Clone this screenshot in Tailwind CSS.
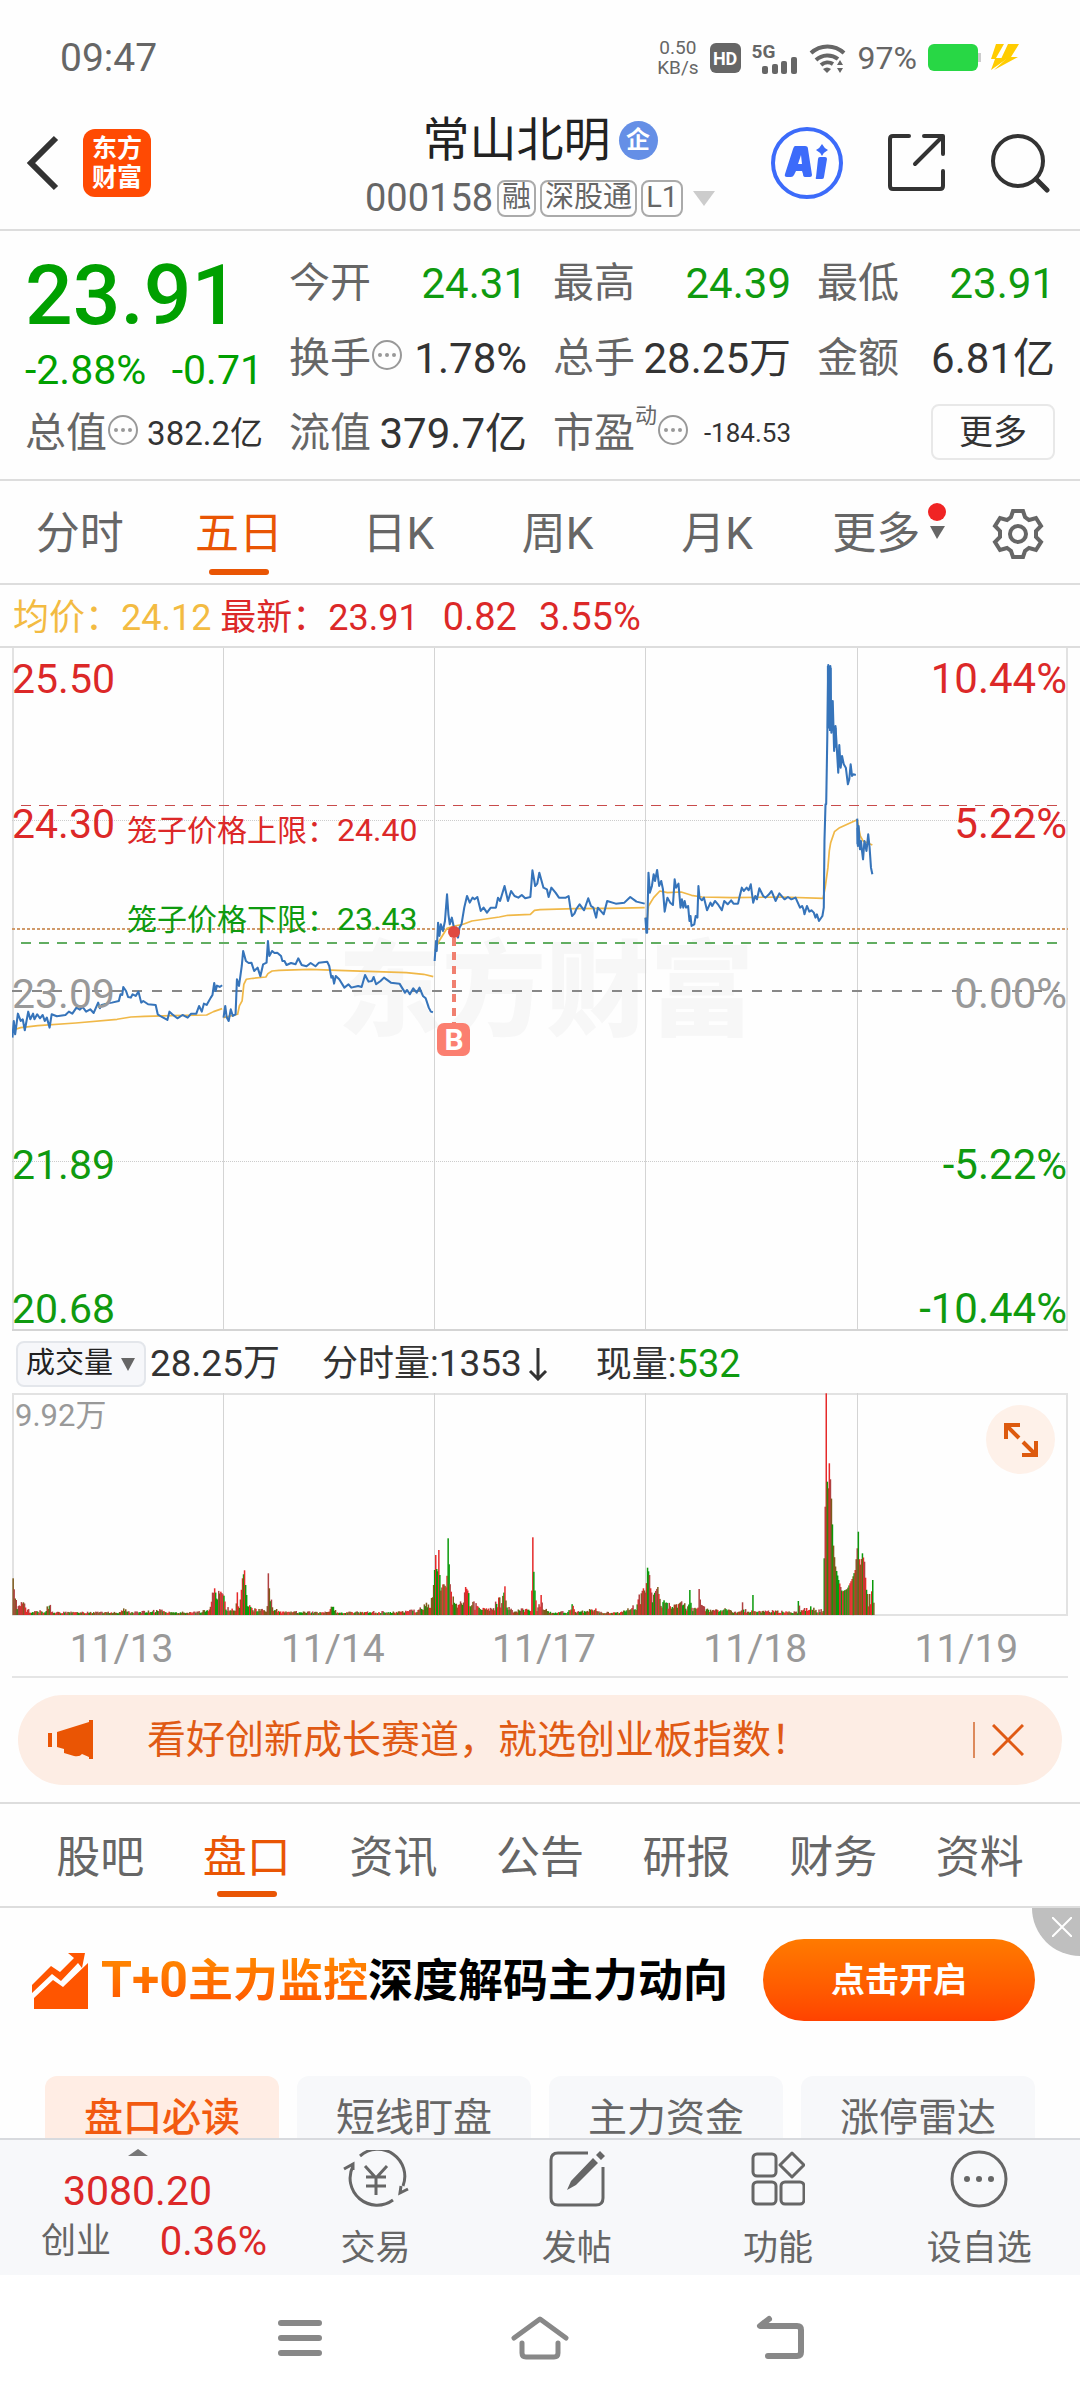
<!DOCTYPE html>
<html lang="zh-CN">
<head>
    <meta charset="UTF-8">
    <meta name="viewport" content="width=device-width, initial-scale=1.0">
    <title>常山北明 000158</title>
    <script src="https://cdn.jsdelivr.net/npm/@tailwindcss/browser@4"></script>
</head>
<body class="bg-[#fefefe] text-[#333] font-[Roboto,'Noto_Sans_CJK_SC',sans-serif]">

    <!-- status bar -->
    <div class="flex items-center justify-between h-28 pt-1 px-[60px] text-[#666]">
        <span class="text-[39px]">09:47</span>
        <div class="flex items-center gap-[11px]">
            <div class="text-[19px] leading-[20px] text-center"><div>0.50</div><div>KB/s</div></div>
            <span class="flex items-center justify-center w-[31px] h-[30px] rounded-md bg-[#666] text-white text-[18px] font-bold">HD</span>
            <div class="relative w-[46px] h-[32px]">
                <span class="absolute left-0 top-0 text-[19px] leading-[19px] font-bold">5G</span>
                <svg class="absolute right-0 bottom-0 w-[36px] h-[17px]" viewBox="0 0 36 17" fill="#666">
                    <rect x="0" y="9" width="6" height="8" rx="2"/><rect x="10" y="7" width="6" height="10" rx="2"/>
                    <rect x="19" y="4" width="6" height="13" rx="2"/><rect x="29" y="0" width="6" height="17" rx="2"/>
                </svg>
            </div>
            <svg class="w-[38px] h-[30px]" viewBox="0 0 38 30" fill="none" stroke="#666" stroke-width="4">
                <path d="M2 10 A24 24 0 0 1 35 10"/><path d="M7 17 A17 17 0 0 1 29 16"/><path d="M12 22 A10 10 0 0 1 24 21"/>
                <path d="M14 26 L18 30 L22 26 Q18 23 14 26z M28 22 L31 17 L34 22z M28 25 L31 30 L34 25z" fill="#666" stroke="none"/>
            </svg>
            <span class="text-[32px]">97%</span>
            <svg class="w-[92px] h-[30px]" viewBox="0 0 92 30">
                <rect x="0" y="1" width="50" height="27" rx="6" fill="#28d745"/><rect x="50" y="10" width="3" height="9" fill="#ccc"/>
                <path d="M68 1 H76 L68 15 H80 L63 27 L67 16 H63z" fill="#fc0"/><path d="M80 1 H91 L83 14 H90 L66 27 L78 16 H73z" fill="#fc0"/>
            </svg>
        </div>
    </div>

    <!-- header -->
    <header class="grid grid-cols-[1fr_auto_1fr] h-[119px] border-b-2 border-[#ddd]">
        <div class="flex items-center gap-[24px] pl-[26px] pb-4">
            <button aria-label="返回">
                <svg class="w-[33px] h-[56px]" viewBox="0 0 33 56" fill="none" stroke="#333" stroke-width="6"><path d="M30 3 L5 28 L30 53"/></svg>
            </button>
            <a href="#" class="flex items-center justify-center w-[68px] h-[68px] rounded-xl bg-[#ff4a03] text-white text-[25px] leading-[29px] font-bold text-center">东方<br>财富</a>
        </div>
        <div class="text-center">
            <h1 class="flex items-center justify-center gap-2 h-14 text-[47px] text-[#222]">常山北明
                <span class="flex items-center justify-center w-[39px] h-[39px] rounded-full bg-[#658fe6] text-white text-[24px] font-bold">企</span>
            </h1>
            <div class="flex items-center justify-center gap-[4px] h-[60px] text-[38px] text-[#666]">000158
                <span class="flex items-center h-[37px] px-[3px] border-2 border-[#aaa] rounded-lg text-[29px]">融</span>
                <span class="flex items-center h-[37px] px-[3px] border-2 border-[#aaa] rounded-lg text-[29px]">深股通</span>
                <span class="flex items-center h-[37px] px-[3px] border-2 border-[#aaa] rounded-lg text-[29px]">L1</span>
                <svg class="ml-[6px] w-[22px] h-[15px]" viewBox="0 0 22 15"><path d="M0 0 H22 L11 15z" fill="#ccc"/></svg>
            </div>
        </div>
        <div class="flex items-center justify-end gap-[44px] pr-[30px] pb-4">
            <button aria-label="Ai">
                <svg class="w-[72px] h-[72px]" viewBox="0 0 72 72" fill="#3c6bfa">
                    <circle cx="36" cy="36" r="34" fill="none" stroke="#3c6bfa" stroke-width="4"/>
                    <path d="M24 19 H34 Q37 19 37 22 L41 48 Q41 50 39 50 H34 Q32 50 32 47 L31 44 H25 L23 48 Q22 50 20 50 H16 Q13 50 14 47 L22 22 Q23 19 24 19z M30 28 L27 37 H31z" fill-rule="evenodd"/>
                    <path d="M49 30 H54 Q56 30 56 32 L53 50 Q53 52 51 52 H46 Q44 52 45 50 L47 32 Q47 30 49 30z"/>
                    <path d="M51 17 Q53 21 57 23 Q53 25 51 29 Q49 25 45 23 Q49 21 51 17z"/>
                </svg>
            </button>
            <button aria-label="分享">
                <svg class="w-[59px] h-[59px]" viewBox="0 0 59 59" fill="none" stroke="#333" stroke-width="4" stroke-linecap="round" stroke-linejoin="round"><path d="M22 3 H6 Q3 3 3 6 V53 Q3 56 6 56 H53 Q56 56 56 53 V38 M37 3 H56 V21 M55 4 L28 31"/></svg>
            </button>
            <button aria-label="搜索">
                <svg class="w-[60px] h-[60px]" viewBox="0 0 60 60" fill="none" stroke="#333" stroke-width="4" stroke-linecap="round"><circle cx="28" cy="28" r="25"/><path d="M46 46 L57 57" stroke-width="5"/></svg>
            </button>
        </div>
    </header>

    <!-- quote summary -->
    <section class="grid grid-cols-4 auto-rows-[75px] gap-x-[26px] px-[25px] pt-[15px] pb-[8px] border-b-2 border-[#ddd] text-[42px] text-[#333]">
        <div class="row-span-2 text-[#00a000]">
            <div class="text-[84px] leading-[100px] font-medium">23.91</div>
            <div class="flex justify-between text-[41px] leading-[48px]"><span>-2.88%</span><span>-0.71</span></div>
        </div>
        <div class="flex items-center justify-between"><span class="text-[41px] text-[#666]">今开</span><span class="text-[#0f9a0f]">24.31</span></div>
        <div class="flex items-center justify-between"><span class="text-[41px] text-[#666]">最高</span><span class="text-[#0f9a0f]">24.39</span></div>
        <div class="flex items-center justify-between"><span class="text-[41px] text-[#666]">最低</span><span class="text-[#0f9a0f]">23.91</span></div>
        <div class="flex items-center justify-between">
            <span class="flex items-center text-[41px] text-[#666]">换手<svg class="mb-2 w-[31px] h-[31px]" viewBox="0 0 31 31" fill="#999"><circle cx="16" cy="16" r="14" fill="none" stroke="#999" stroke-width="2"/><circle cx="9" cy="16" r="2"/><circle cx="16" cy="16" r="2"/><circle cx="23" cy="16" r="2"/></svg></span>
            <span>1.78%</span>
        </div>
        <div class="flex items-center justify-between"><span class="text-[41px] text-[#666]">总手</span><span>28.25万</span></div>
        <div class="flex items-center justify-between"><span class="text-[41px] text-[#666]">金额</span><span>6.81亿</span></div>
        <div class="flex items-center justify-between">
            <span class="flex items-center text-[41px] text-[#666]">总值<svg class="mb-2 w-[31px] h-[31px]" viewBox="0 0 31 31" fill="#999"><circle cx="16" cy="16" r="14" fill="none" stroke="#999" stroke-width="2"/><circle cx="9" cy="16" r="2"/><circle cx="16" cy="16" r="2"/><circle cx="23" cy="16" r="2"/></svg></span>
            <span class="text-[33px]">382.2亿</span>
        </div>
        <div class="flex items-center justify-between"><span class="text-[41px] text-[#666]">流值</span><span>379.7亿</span></div>
        <div class="flex items-center justify-between">
            <span class="flex items-center text-[41px] text-[#666]">市盈<span class="mb-9 text-[22px]">动</span><svg class="mb-2 w-[31px] h-[31px]" viewBox="0 0 31 31" fill="#999"><circle cx="16" cy="16" r="14" fill="none" stroke="#999" stroke-width="2"/><circle cx="9" cy="16" r="2"/><circle cx="16" cy="16" r="2"/><circle cx="23" cy="16" r="2"/></svg></span>
            <span class="text-[26px]">-184.53</span>
        </div>
        <div class="flex items-center justify-end">
            <button class="w-[124px] h-14 mb-1 border-2 border-[#e8e8e8] rounded-lg text-[34px] leading-none">更多</button>
        </div>
    </section>

    <!-- period tabs -->
    <nav class="flex items-center h-[104px] pt-1 border-b-2 border-[#ddd] text-[44px] text-[#666]">
        <a href="#" class="flex-1 text-center">分时</a>
        <a href="#" class="relative flex-1 text-center text-[#e95504]">五日<span class="absolute left-1/2 -bottom-2 -translate-x-1/2 w-[60px] h-[6px] rounded-full bg-[#e95504]"></span></a>
        <a href="#" class="flex-1 text-center">日K</a>
        <a href="#" class="flex-1 text-center">周K</a>
        <a href="#" class="flex-1 text-center">月K</a>
        <a href="#" class="relative flex-1 text-center">更多
            <svg class="absolute right-1 top-0 w-[24px] h-[40px]" viewBox="0 0 24 40"><circle cx="9" cy="11" r="9" fill="#f02424"/><path d="M2 25 H17 L9 38z" fill="#666"/></svg>
        </a>
        <button aria-label="设置" class="flex justify-center w-[124px]">
            <svg class="w-[52px] h-[52px]" viewBox="-1 -1 52 52" fill="none" stroke="#666" stroke-width="4"><path d="M20 2 H30 L32 8 L36 11 L43 9 L48 17 L43 22 V28 L48 33 L43 41 L36 39 L32 42 L30 48 H20 L18 42 L14 39 L7 41 L2 33 L7 28 V22 L2 17 L7 9 L14 11 L18 8z"/><circle cx="25" cy="25" r="8"/></svg>
        </button>
    </nav>

    <div class="flex h-[63px] items-center pt-1 px-[13px] text-[36px] whitespace-pre border-b-2 border-[#ddd] text-[#dc2828]"><span class="text-[#f3bb42]">均价：24.12 </span><span>最新：23.91</span><span class="ml-[24px] text-[38px]">0.82</span><span class="ml-[22px] text-[38px]">3.55%</span></div>

    <!-- five day price chart -->
    <section class="relative mx-3 h-[683px]">
        <svg class="absolute inset-0 w-full h-full" viewBox="0 0 1056 683" preserveAspectRatio="none" fill="none">
            <text x="326" y="380" font-size="104" font-weight="900" fill="#f7f7f7">东方财富</text>
            <path d="M1 0 V683 M1055 0 V683" stroke="#e2e2e2" stroke-width="2"/>
            <path d="M211.5 0 V683 M422.5 0 V683 M633.5 0 V683 M845.5 0 V683" stroke="#d4d4d4"/>
            <path d="M0 682 H1056" stroke="#d4d4d4" stroke-width="2"/>
            <path d="M0 172.500 H1056 M0 513.500 H1056" stroke="#ccc" stroke-dasharray="1 1"/>
            <path d="M9 157.500 H1046" stroke="#c84b4b" stroke-dasharray="10 8"/>
            <path d="M0 281 H1056" stroke="#d09a6a" stroke-width="2" stroke-dasharray="3 2"/>
            <path d="M9 295 H1046" stroke="#61ad61" stroke-width="2" stroke-dasharray="10 8"/>
            <path d="M0 343 H1046" stroke="#888" stroke-width="2" stroke-dasharray="10 10"/>
            <!-- average price -->
            <g stroke="#f0b848" stroke-width="5" stroke-linejoin="round">
                <g transform="translate(-12 -7) scale(.3444 .3333)">
                    <path d="M36 1168 L60 1160 110 1154 220 1146 340 1135 380 1128 420 1126 500 1124 600 1122 620 1112 645 1103"/>
                    <path d="M649 1130 L690 1120 695 1095 703 1080 708 1030 715 1015 735 1012 772 1008 778 998 790 990 810 988 900 985 980 988 1180 995 1230 1000 1258 1007"/>
                    <path d="M1262 930 L1275 900 1298 862 1320 855 1345 850 1370 840 1450 828 1475 823 1540 820 1552 808 1568 806 1668 803 1768 802 1872 800"/>
                </g>
                <g transform="translate(528 -7) scale(.3444 .3333)">
                    <path d="M306 830 L311 840 315 795 330 770 348 750 370 755 410 753 440 763 470 768 560 770 700 768 822 772 828 740 836 680 840 630 844 605 855 572 870 560 921 536"/>
                    <path d="M921 536 L930 585 938 600 965 612"/>
                </g>
            </g>
            <!-- price -->
            <g stroke="#3674ba" stroke-width="6" stroke-linejoin="round">
                <g transform="translate(-12 -7) scale(.3444 .3333)">
                    <path d="M36 1190 L40 1140 44 1180 52 1118 60 1140 66 1135 72 1168 82 1112 88 1135 96 1118 100 1135 108 1120 116 1132 124 1122 130 1140 136 1130 144 1160 150 1120 165 1126 190 1122 200 1112 210 1118 222 1100 232 1106 240 1098 250 1112 262 1105 272 1116 285 1085 290 1102 295 1092 310 1088 325 1085 345 1080 350 1060 355 1062 358 1038 366 1050 372 1068 380 1070 385 1060 394 1065 402 1052 410 1085 416 1080 430 1090 452 1092 458 1120 470 1128 486 1137 492 1112 500 1120 515 1132 530 1122 545 1130 555 1118 570 1118 578 1095 586 1112 592 1088 600 1092 612 1070 617 1062 622 1026 626 1050 630 1034 638 1038 645 1033"/>
                    <path d="M649 1130 L654 1095 658 1128 664 1140 670 1105 676 1125 684 1120 688 1015 694 1035 702 975 706 930 714 960 722 966 730 965 738 990 748 980 756 1006 764 970 774 965 778 900 782 945 790 930 797 936 805 935 816 945 820 960 826 960 832 972 845 966 858 970 866 952 876 972 890 976 902 966 916 976 926 965 950 962 956 975 962 1010 966 1005 970 1028 975 1005 985 1015 1000 1040 1012 1030 1020 1040 1040 1035 1050 1038 1060 1002 1070 1022 1080 1020 1085 1008 1092 1030 1105 1020 1115 1010 1135 1025 1160 1028 1176 1055 1182 1047 1190 1060 1200 1042 1210 1055 1218 1040 1228 1065 1236 1072 1245 1100 1251 1112 1257 1114"/>
                    <path d="M1262 960 L1266 900 1268 930 1272 845 1276 885 1280 850 1286 870 1292 840 1298 760 1302 820 1306 850 1312 830 1320 870 1325 860 1330 890 1334 860 1340 850 1348 800 1356 765 1364 785 1372 770 1378 775 1386 768 1396 810 1404 800 1414 815 1425 800 1440 800 1446 770 1452 780 1465 735 1475 780 1484 750 1494 765 1505 770 1515 762 1525 772 1540 768 1546 688 1554 735 1560 728 1566 695 1578 740 1588 745 1593 768 1601 740 1613 755 1623 770 1643 770 1651 765 1656 800 1661 825 1668 818 1673 805 1683 790 1696 808 1708 772 1716 795 1723 800 1731 830 1736 800 1753 820 1763 780 1788 788 1813 785 1830 768 1848 782 1872 788"/>
                </g>
                <g transform="translate(528 -7) scale(.3444 .3333)">
                    <path d="M306 830 L309 875 311 875 315 695 319 755 325 735 330 700 334 720 340 687 346 735 352 720 357 745 362 812 366 790 370 770 378 785 386 792 391 715 395 740 402 728 408 800 412 775 416 800 420 780 424 800 430 795 434 840 437 825 440 855 448 850 452 825 457 830 460 735 463 770 470 778 476 770 485 808 495 785 500 795 508 780 518 792 528 808 535 780 545 790 555 778 562 788 575 788 580 765 586 740 592 750 600 740 606 748 612 730 619 785 625 765 630 775 637 742 648 765 655 770 665 760 672 750 684 780 695 757 710 775 720 768 730 775 742 770 755 800 761 795 765 805 768 820 775 795 782 812 788 808 795 815 800 830 804 820 810 840 820 825 824 800 826 600 829 490 831 490 834 300 837 72 840 260 843 75 846 275 850 180 854 330 858 255 862 325 866 395 869 312 873 380 877 345 882 370 888 380 894 430 898 415 902 370 906 405 910 400 917 402"/>
                    <path d="M921 533 L923 615 925 555 929 625 932 600 935 630 938 655 942 600 948 630 953 580 957 620 961 680 965 700"/>
                    <path d="M837 75 V260 M843 80 V270 M857 260 V320 M923 560 V610" stroke-width="8"/>
                </g>
            </g>
            <path d="M442 290 V376" stroke="#f08070" stroke-width="4" stroke-dasharray="8 6"/>
            <circle cx="442" cy="284" r="6" fill="#e04a40"/>
            <rect x="425" y="375" width="33" height="33" rx="7" fill="#fb7f70"/>
            <text x="442" y="402" font-size="30" font-weight="700" text-anchor="middle" fill="#fff">B</text>
        </svg>
        <div class="absolute left-0 top-[10px] text-[41px] leading-[42px] text-[#dc2828]">25.50</div>
        <div class="absolute right-[1px] top-[10px] text-[42px] leading-[42px] text-[#dc2828]">10.44%</div>
        <div class="absolute left-0 top-[155px] text-[41px] leading-[42px] text-[#dc2828]">24.30</div>
        <div class="absolute right-[1px] top-[155px] text-[42px] leading-[42px] text-[#dc2828]">5.22%</div>
        <div class="absolute left-0 top-[325px] text-[41px] leading-[42px] text-[#999]">23.09</div>
        <div class="absolute right-[1px] top-[325px] text-[42px] leading-[42px] text-[#999]">0.00%</div>
        <div class="absolute left-0 top-[496px] text-[41px] leading-[42px] text-[#0f9a0f]">21.89</div>
        <div class="absolute right-[1px] top-[496px] text-[42px] leading-[42px] text-[#0f9a0f]">-5.22%</div>
        <div class="absolute left-0 top-[640px] text-[41px] leading-[42px] text-[#0f9a0f]">20.68</div>
        <div class="absolute right-[1px] top-[640px] text-[42px] leading-[42px] text-[#0f9a0f]">-10.44%</div>
        <div class="absolute left-[115px] top-[161px] text-[30px] leading-[42px] text-[#dc2828]">笼子价格上限：<span class="text-[32px]">24.40</span></div>
        <div class="absolute left-[115px] top-[250px] text-[30px] leading-[42px] text-[#0f9a0f]">笼子价格下限：<span class="text-[32px]">23.43</span></div>
    </section>

    <!-- volume -->
    <div class="flex items-center h-[62px] pt-1 pl-4 text-[36px] whitespace-nowrap">
        <button class="flex items-center gap-2 h-[46px] w-[130px] pl-[8px] mr-[4px] border-2 border-[#e3e6eb] rounded-lg bg-[#f6f7fa] text-[29px] text-[#222]">成交量
            <svg class="w-[14px] h-[13px]" viewBox="0 0 14 13"><path d="M0 0 H14 L7 13z" fill="#666"/></svg>
        </button>
        <span class="text-[37px]">28.25万</span>
        <span class="ml-[42px]">分时量:<span class="text-[37px]">1353</span></span>
        <svg class="ml-[6px] w-[20px] h-[34px]" viewBox="0 0 20 34" fill="none" stroke="#333" stroke-width="3"><path d="M10 1 V32 M2 24 L10 32 L18 24"/></svg>
        <span class="ml-[48px]">现量:<span class="text-[38px] text-[#0f9a0f]">532</span></span>
    </div>
    <section class="relative mx-3 h-[223px]">
        <svg class="absolute inset-0 w-full h-full" viewBox="0 0 1056 223" preserveAspectRatio="none" fill="none">
            <path d="M1 1 H1055 V222 H1z" stroke="#e2e2e2" stroke-width="2"/>
            <path d="M211.5 0 V222 M422.5 0 V222 M633.5 0 V222 M845.5 0 V222" stroke="#d4d4d4"/>
            <g id="volume"></g>
        </svg>
        <div class="absolute left-[3px] top-[5px] text-[31px] leading-[36px] text-[#999]">9.92万</div>
        <button aria-label="放大" class="absolute right-[13px] top-[12px] flex items-center justify-center w-[69px] h-[69px] rounded-full bg-[#fef1e9]">
            <svg class="w-[34px] h-[34px]" viewBox="0 0 34 34" fill="none" stroke="#dd5a0e" stroke-width="4"><path d="M16 2 H2 V16 M2 2 L15 15 M18 32 H32 V18 M32 32 L19 19"/></svg>
        </button>
    </section>
    <div class="mx-3 border-b-2 border-[#e5e5e5]">
        <div class="grid grid-cols-5 items-center ml-1 -mr-1 h-[60px] pt-1 text-center text-[39px] text-[#999]">
            <span>11/13</span><span>11/14</span><span>11/17</span><span>11/18</span><span>11/19</span>
        </div>
    </div>

    <!-- notice -->
    <div class="flex items-center mx-[18px] my-[17px] h-[90px] pl-[30px] pr-[38px] rounded-full bg-[#fdede4] text-[39px] text-[#e05a14]">
        <svg class="w-[45px] h-[40px]" viewBox="0 0 45 40" fill="#ea5504"><path d="M0 13 H4 V27 H0z M9 12 L41 2 V0 H45 V39 H41 V37 L34 34 Q32 37 26 36 L16 33 V29 L9 27z"/></svg>
        <a href="#" class="ml-[54px] flex-1">看好创新成长赛道，就选创业板指数！</a>
        <span class="w-[2px] h-9 bg-[#dd8a5c]"></span>
        <button aria-label="关闭" class="ml-[17px]"><svg class="w-[32px] h-[32px]" viewBox="0 0 32 32" stroke="#e05a14" stroke-width="3"><path d="M1 1 L31 31 M31 1 L1 31"/></svg></button>
    </div>

    <!-- content tabs -->
    <nav class="flex items-center h-[106px] pt-1.5 px-[27px] border-y-2 border-[#ddd] text-[44px] text-[#666]">
        <a href="#" class="flex-1 text-center">股吧</a>
        <a href="#" class="relative flex-1 text-center text-[#e95504]">盘口<span class="absolute left-1/2 -bottom-1.5 -translate-x-1/2 w-[60px] h-[6px] rounded-full bg-[#e95504]"></span></a>
        <a href="#" class="flex-1 text-center">资讯</a>
        <a href="#" class="flex-1 text-center">公告</a>
        <a href="#" class="flex-1 text-center">研报</a>
        <a href="#" class="flex-1 text-center">财务</a>
        <a href="#" class="flex-1 text-center">资料</a>
    </nav>

    <!-- promotion -->
    <section class="relative flex items-center h-[168px] pl-8 pr-[45px] pb-6">
        <svg class="w-[56px] h-[57px]" viewBox="0 0 56 57" fill="#ff5500"><path d="M0 33 L19 14 L28 20 L42 6 L36 1 H53 L50 16 L46 11 L29 29 L20 22 L0 41z"/><path d="M2 57 V46 L21 28 L31 35 L56 11 V57z"/></svg>
        <div class="flex-1 ml-[13px] text-[45px] font-bold text-black whitespace-nowrap"><span class="bg-linear-to-b from-[#ff8a00] to-[#ff5000] bg-clip-text text-transparent"><span class="text-[50px]">T+0</span>主力监控</span>深度解码主力动向</div>
        <button class="w-[272px] h-[82px] rounded-full bg-linear-to-b from-[#ff7a00] to-[#ff4200] text-white text-[34px] font-bold">点击开启</button>
        <button aria-label="关闭广告" class="absolute right-0 top-0 flex items-start justify-end w-12 h-12 pr-[8px] pt-[9px] rounded-bl-full bg-[#bfbfbf]">
            <svg class="w-[20px] h-[20px]" viewBox="0 0 20 20" stroke="#fff" stroke-width="2"><path d="M0 0 L20 20 M20 0 L0 20"/></svg>
        </button>
    </section>
    <div class="grid grid-cols-4 gap-[18px] px-[45px] h-[62px] overflow-hidden text-[39px] text-[#666]">
        <button class="h-[84px] rounded-xl bg-[#ffede4] text-[#f25a10] font-medium">盘口必读</button>
        <button class="h-[84px] rounded-xl bg-[#f7f8fa]">短线盯盘</button>
        <button class="h-[84px] rounded-xl bg-[#f7f8fa]">主力资金</button>
        <button class="h-[84px] rounded-xl bg-[#f7f8fa]">涨停雷达</button>
    </div>

    <!-- bottom bar -->
    <footer class="flex h-[137px] border-t-2 border-[#d8dade] bg-[#f7f8fa] text-[35px] text-[#666]">
        <a href="#" class="flex flex-col items-center w-[275px] pt-[9px]">
            <svg class="w-[20px] h-[7px]" viewBox="0 0 20 7"><path d="M0 7 L10 0 L20 7z" fill="#777"/></svg>
            <span class="mt-[9px] text-[41px] leading-[52px] text-[#dc2828]">3080.20</span>
            <span class="flex items-center justify-between w-full pl-[41px] pr-[8px] leading-[50px]">创业<span class="text-[40px] text-[#dc2828]">0.36%</span></span>
        </a>
        <a href="#" class="flex-1 flex flex-col items-center pt-[10px]">
            <svg class="w-[66px] h-[58px]" viewBox="0 0 66 58" fill="none" stroke="#666" stroke-width="3"><path d="M17 6 A27 27 0 0 1 60 36 M50 50 A27 27 0 0 1 10 16 M1 19 L10 14 V20 M65 39 L57 43 L58 36 M22 16 L33 28 L44 16 M33 28 V45 M23 27 H43 M23 36 H43"/></svg>
            <span class="mt-[18px] leading-[46px]">交易</span>
        </a>
        <a href="#" class="flex-1 flex flex-col items-center pt-[10px]">
            <svg class="w-[56px] h-[58px]" viewBox="0 0 56 58" fill="none" stroke="#666" stroke-width="3"><path d="M39 3 H9 Q2 3 2 10 V48 Q2 55 9 55 H47 Q54 55 54 48 V17"/><path d="M44 8 L49 13 L27 35 L18 40 L22 31z M47 5 L51 1 L56 6 L52 10z" fill="#666" stroke="none"/></svg>
            <span class="mt-[18px] leading-[46px]">发帖</span>
        </a>
        <a href="#" class="flex-1 flex flex-col items-center pt-[10px]">
            <svg class="w-[54px] h-[58px]" viewBox="0 0 54 58" fill="none" stroke="#666" stroke-width="3"><rect x="2" y="4" width="23" height="22" rx="4"/><rect x="2" y="32" width="23" height="22" rx="4"/><rect x="30" y="32" width="23" height="22" rx="4"/><path d="M41 3 L53 15 L41 27 L29 15z" stroke-linejoin="round"/></svg>
            <span class="mt-[18px] leading-[46px]">功能</span>
        </a>
        <a href="#" class="flex-1 flex flex-col items-center pt-[10px]">
            <svg class="w-[58px] h-[58px]" viewBox="0 0 58 58" fill="#666"><circle cx="29" cy="29" r="27" fill="none" stroke="#666" stroke-width="3"/><circle cx="17" cy="29" r="3"/><circle cx="29" cy="29" r="3"/><circle cx="41" cy="29" r="3"/></svg>
            <span class="mt-[18px] leading-[46px]">设自选</span>
        </a>
    </footer>

    <!-- system navigation -->
    <div class="grid grid-cols-3 h-[125px] px-[180px] bg-white">
        <button aria-label="菜单" class="flex items-center justify-center"><svg class="w-[46px] h-[44px]" viewBox="0 0 46 44" stroke="#888" stroke-width="6" stroke-linecap="round"><path d="M4 7 H42 M4 22 H42 M4 37 H42"/></svg></button>
        <button aria-label="主屏幕" class="flex items-center justify-center"><svg class="w-[58px] h-[46px]" viewBox="0 0 58 46" fill="none" stroke="#888" stroke-width="5" stroke-linecap="round" stroke-linejoin="round"><path d="M3 23 L29 4 L55 23 M11 28 V38 Q11 42 15 42 H43 Q47 42 47 38 V28"/></svg></button>
        <button aria-label="后退" class="flex items-center justify-center"><svg class="w-[50px] h-[46px]" viewBox="0 0 50 46" fill="none" stroke="#888" stroke-width="6" stroke-linecap="round" stroke-linejoin="round"><path d="M14 4 L5 11 H42 Q46 11 46 15 V37 Q46 41 42 41 H13"/></svg></button>
    </div>

    <script>
        // [offset, height, colour index] turning points of the volume envelope, 3 units per pixel
        var points = [[36,110,1],[42,44],[50,20],[65,35],[75,18],[90,10],[130,12],[140,35],[150,8],[345,8],[358,18],[375,7],[460,14],[500,9],[570,8],[600,15],[612,40,0],[621,80,0],[628,50],[639,70,0],[648,58,1],[655,20],[680,18],[687,68,0],[694,18],[702,110,0],[708,134,0],[711,90,1],[716,40],[730,20],[772,12],[775,45],[777,125,6],[782,50,1],[790,25],[810,10],[950,8],[965,28],[975,8],[1170,10],[1215,15],[1240,38],[1254,45],[1263,180,0],[1268,110],[1272,195,0],[1277,70],[1285,95,0],[1295,80],[1299,230,1],[1304,100,1],[1310,55],[1325,28],[1345,35],[1350,84,0],[1358,70,0],[1365,40],[1385,25],[1430,15],[1447,55,0],[1455,30],[1464,86,0],[1470,25],[1485,12],[1541,20],[1545,233,0],[1549,95,1],[1556,20],[1562,20],[1569,60,0],[1573,22],[1600,8],[1648,10],[1658,38,1],[1668,8],[1728,20],[1738,8],[1798,8],[1828,20],[1843,25],[1858,60],[1866,80,0],[1873,65],[1878,142,1],[1884,120,6],[1887,80],[1893,55],[1908,84,2],[1915,35],[1928,50,1],[1943,25],[1983,35],[1997,20],[2001,75,1],[2006,18],[2023,20],[2028,78,6],[2032,25],[2068,12],[2108,20],[2128,8],[2150,10],[2154,38,6],[2159,15],[2180,10],[2184,60,1],[2188,10],[2248,12],[2313,8],[2316,42,1],[2321,10],[2353,28],[2368,12],[2388,15],[2394,325,6],[2397,665,0],[2400,400,1],[2403,380,2],[2406,455,0],[2411,375,2],[2417,220,0],[2423,150,1],[2433,105,1],[2443,70],[2458,78],[2473,110,0],[2481,135,0],[2487,200,6],[2490,250,1],[2494,140],[2502,185,1],[2508,160,6],[2513,80],[2520,50],[2528,60],[2532,105,1],[2536,10]];
        var colors = ["#e52a2a", "#0a9a0a", "#7d5a1c", "#0a9a0a", "#e52a2a", "#7d5a1c", "#b04040"];
        var bars = "", k = 0, seed = 7;
        for (var x = 36; x <= 2535; x += 3) {
            while (points[k + 1][0] < x) k++;
            var a = points[k], b = points[k + 1];
            var h = a[1] + (b[1] - a[1]) * (x - a[0]) / (b[0] - a[0]);
            seed = (seed * 1103 + 12345) % 65536;
            var r = seed / 65536;
            var color = colors[Math.floor(r * 7)];
            if (x > b[0] - 2 && b[2] !== undefined) color = colors[b[2]];
            else if (h < 60) h = h * (0.5 + r * 0.8);
            h = Math.max(h, 5) / 3;
            bars += '<rect x="' + (x * 0.3444 - 12).toFixed(1) + '" y="' + (222 - h).toFixed(1) + '" width="1.5" height="' + h.toFixed(1) + '" fill="' + color + '"/>';
        }
        document.getElementById("volume").innerHTML = bars;
    </script>

</body>
</html>
